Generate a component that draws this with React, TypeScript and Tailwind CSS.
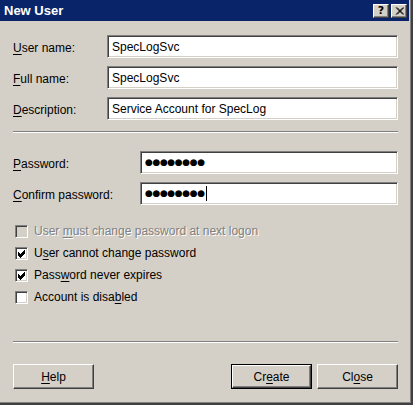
import type { ReactNode } from 'react'

const sunken =
  'border border-t-[#808080] border-l-[#808080] border-r-white border-b-white shadow-[inset_1px_1px_0_#404040,inset_-1px_-1px_0_#d4d0c8]'

const raised =
  'border border-t-white border-l-white border-r-[#404040] border-b-[#404040] shadow-[inset_-1px_-1px_0_#808080,inset_1px_1px_0_#d4d0c8]'

function K({ children }: { children: ReactNode }) {
  return <span className="underline underline-offset-[2px] decoration-1">{children}</span>
}

function Field({ label, labelW, children }: { label: ReactNode; labelW: string; children: ReactNode }) {
  return (
    <div className="flex items-center">
      <div className={`${labelW} shrink-0 pt-[2px]`}>{label}</div>
      <div className={`${sunken} flex-1 h-[23px] bg-white flex items-center pl-[4px]`}>{children}</div>
    </div>
  )
}

function Dots({ cursor }: { cursor?: boolean }) {
  return (
    <span className="flex items-center">
      <span className="font-['DejaVu_Sans',sans-serif] text-[9px] tracking-[-0.4px] leading-none">●●●●●●●●</span>
      {cursor && <span className="ml-[1px] w-[1px] h-[15px] bg-black" />}
    </span>
  )
}

function Check({ label, checked, disabled }: { label: ReactNode; checked?: boolean; disabled?: boolean }) {
  return (
    <div className="flex items-center h-[22px]">
      <div className={`${sunken} w-[13px] h-[13px] ${disabled ? 'bg-[#d4d0c8]' : 'bg-white'} flex items-center justify-center`}>
        {checked && (
          <svg width="9" height="9" viewBox="0 0 9 9">
            <path d="M1 3.5 L3.5 6 L8 1.5 M1 4.5 L3.5 7 L8 2.5 M1 5.5 L3.5 8 L8 3.5" stroke="#000" strokeWidth="1" fill="none" shapeRendering="crispEdges" />
          </svg>
        )}
      </div>
      <span
        className={`ml-[6px] ${disabled ? 'text-[#808080] [text-shadow:1px_1px_0_#fff]' : 'text-black'}`}
      >
        {label}
      </span>
    </div>
  )
}

function Button({ children, primary }: { children: ReactNode; primary?: boolean }) {
  return (
    <div className={`w-[81px] h-[25px] bg-[#d4d0c8] ${primary ? 'border border-black' : ''}`}>
      <div className={`${raised} w-full h-full flex items-center justify-center`}>{children}</div>
    </div>
  )
}

export default function App() {
  return (
    <div className="w-[415px] h-[409px] bg-white font-[Liberation_Sans,Arial,sans-serif] text-[12px] text-black">
      <div className="w-[413px] h-[405px] border-r-2 border-b-2 border-[#404040]">
        <div className="h-full border-r border-b border-[#808080] bg-[#d4d0c8] flex flex-col">
          {/* title bar */}
          <div className="h-[21px] bg-[#0a246a] flex items-center justify-between pl-[4px] pr-[2px] mr-[1px]">
            <span className="text-white font-bold text-[13px]">New User</span>
            <div className="flex gap-[2px]">
              <div className={`${raised} bg-[#d4d0c8] w-[16px] h-[14px] flex items-center justify-center`}>
                <span className="font-bold text-[11px] leading-none font-[DejaVu_Sans,sans-serif]">?</span>
              </div>
              <div className={`${raised} bg-[#d4d0c8] w-[16px] h-[14px] flex items-center justify-center`}>
                <svg width="9" height="8" viewBox="0 0 9 8">
                  <path d="M1 0.5 L8 7.5 M2 0.5 L9 7.5 M8 0.5 L1 7.5 M9 0.5 L2 7.5" stroke="#000" strokeWidth="1" />
                </svg>
              </div>
            </div>
          </div>

          <div className="flex-1 flex flex-col pl-[13px] pr-[12px]">
            <div className="pt-[14px] flex flex-col gap-[8px]">
              <Field labelW="w-[94px]" label={<><K>U</K>ser name:</>}>SpecLogSvc</Field>
              <Field labelW="w-[94px]" label={<><K>F</K>ull name:</>}>SpecLogSvc</Field>
              <Field labelW="w-[94px]" label={<><K>D</K>escription:</>}>Service Account for SpecLog</Field>
            </div>

            <div className="mt-[11px] h-[2px] border-t border-b border-t-[#808080] border-b-white" />

            <div className="pt-[18px] flex flex-col gap-[8px]">
              <Field labelW="w-[127px]" label={<><K>P</K>assword:</>}>
                <Dots />
              </Field>
              <Field labelW="w-[127px]" label={<><K>C</K>onfirm password:</>}>
                <Dots cursor />
              </Field>
            </div>

            <div className="mt-[15px] pl-[2px] flex flex-col">
              <Check disabled label={<>User <K>m</K>ust change password at next logon</>} />
              <Check checked label={<>U<K>s</K>er cannot change password</>} />
              <Check checked label={<>Pass<K>w</K>ord never expires</>} />
              <Check label={<>Account is disa<K>b</K>led</>} />
            </div>

            <div className="mt-[33px] h-[2px] border-t border-b border-t-[#808080] border-b-white" />

            <div className="mt-[21px] flex items-center">
              <Button><span><K>H</K>elp</span></Button>
              <div className="flex-1" />
              <Button primary><span>Cr<K>e</K>ate</span></Button>
              <div className="w-[5px]" />
              <Button><span>Cl<K>o</K>se</span></Button>
            </div>
          </div>
        </div>
      </div>
    </div>
  )
}
